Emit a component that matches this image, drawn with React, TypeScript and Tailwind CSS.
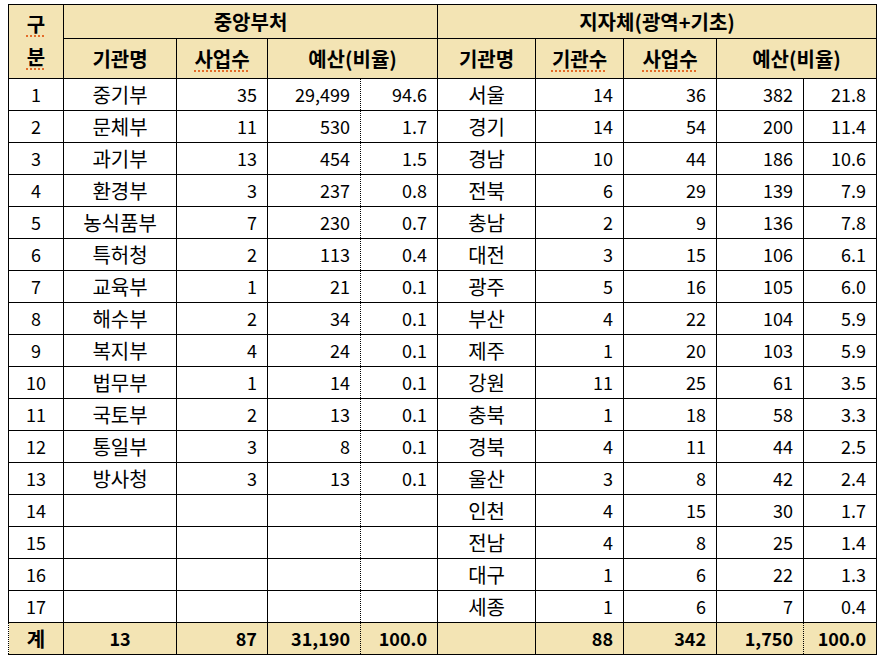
const central = [
  ["중기부", "35", "29,499", "94.6"],
  ["문체부", "11", "530", "1.7"],
  ["과기부", "13", "454", "1.5"],
  ["환경부", "3", "237", "0.8"],
  ["농식품부", "7", "230", "0.7"],
  ["특허청", "2", "113", "0.4"],
  ["교육부", "1", "21", "0.1"],
  ["해수부", "2", "34", "0.1"],
  ["복지부", "4", "24", "0.1"],
  ["법무부", "1", "14", "0.1"],
  ["국토부", "2", "13", "0.1"],
  ["통일부", "3", "8", "0.1"],
  ["방사청", "3", "13", "0.1"],
];

const local = [
  ["서울", "14", "36", "382", "21.8"],
  ["경기", "14", "54", "200", "11.4"],
  ["경남", "10", "44", "186", "10.6"],
  ["전북", "6", "29", "139", "7.9"],
  ["충남", "2", "9", "136", "7.8"],
  ["대전", "3", "15", "106", "6.1"],
  ["광주", "5", "16", "105", "6.0"],
  ["부산", "4", "22", "104", "5.9"],
  ["제주", "1", "20", "103", "5.9"],
  ["강원", "11", "25", "61", "3.5"],
  ["충북", "1", "18", "58", "3.3"],
  ["경북", "4", "11", "44", "2.5"],
  ["울산", "3", "8", "42", "2.4"],
  ["인천", "4", "15", "30", "1.7"],
  ["전남", "4", "8", "25", "1.4"],
  ["대구", "1", "6", "22", "1.3"],
  ["세종", "1", "6", "7", "0.4"],
];

const cell = "border border-black p-0";
const num = `${cell} text-right pr-[10px]`;
const mid = `${cell} text-center`;
const kor = `${cell} text-center text-[20px]`;
const head = "bg-[#f3e4b4] font-bold";

// spell-check squiggle under some header words
function Squiggle({ children }: { children: React.ReactNode }) {
  return (
    <span className="underline decoration-dotted decoration-[#e46c2a] decoration-[1.5px] underline-offset-[4px]">
      {children}
    </span>
  );
}

export default function App() {
  return (
    <div className="bg-white min-h-[661px] pt-[4px] pl-[8px] text-black text-[18px] font-['Malgun_Gothic','Noto_Sans_CJK_KR',sans-serif]">
      <table className="table-fixed border-collapse w-[868px]">
        <colgroup>
          <col className="w-[55px]" />
          <col className="w-[113px]" />
          <col className="w-[91px]" />
          <col className="w-[93px]" />
          <col className="w-[77px]" />
          <col className="w-[98px]" />
          <col className="w-[88px]" />
          <col className="w-[93px]" />
          <col className="w-[87px]" />
          <col className="w-[73px]" />
        </colgroup>
        <thead>
          <tr className={`${head} h-[34px]`}>
            <td rowSpan={2} className={kor}>
              <div className="flex flex-col items-center leading-[33px] pb-[4px]">
                <Squiggle>구</Squiggle>
                <Squiggle>분</Squiggle>
              </div>
            </td>
            <td colSpan={4} className={kor}>
              중앙부처
            </td>
            <td colSpan={5} className={kor}>
              지자체(광역+기초)
            </td>
          </tr>
          <tr className={`${head} h-[40px]`}>
            <td className={kor}>기관명</td>
            <td className={kor}>
              <Squiggle>사업수</Squiggle>
            </td>
            <td colSpan={2} className={kor}>
              예산(비율)
            </td>
            <td className={kor}>기관명</td>
            <td className={kor}>
              <Squiggle>기관수</Squiggle>
            </td>
            <td className={kor}>
              <Squiggle>사업수</Squiggle>
            </td>
            <td colSpan={2} className={kor}>
              예산(비율)
            </td>
          </tr>
        </thead>
        <tbody>
          {local.map((l, i) => {
            const c = central[i];
            return (
              <tr key={i} className="h-[32px]">
                <td className={mid}>{i + 1}</td>
                <td className={kor}>{c ? c[0] : ""}</td>
                <td className={num}>{c ? c[1] : ""}</td>
                <td className={`${num} [border-right-style:dotted]`}>{c ? c[2] : ""}</td>
                <td className={`${num} [border-left-style:dotted]`}>{c ? c[3] : ""}</td>
                <td className={kor}>{l[0]}</td>
                <td className={num}>{l[1]}</td>
                <td className={num}>{l[2]}</td>
                <td className={num}>{l[3]}</td>
                <td className={num}>{l[4]}</td>
              </tr>
            );
          })}
          <tr className={`${head} h-[32px]`}>
            <td className={`${kor} [border-left-style:dotted]`}>계</td>
            <td className={mid}>13</td>
            <td className={num}>87</td>
            <td className={`${num} [border-right-style:dotted]`}>31,190</td>
            <td className={`${num} [border-left-style:dotted]`}>100.0</td>
            <td className={mid}></td>
            <td className={num}>88</td>
            <td className={num}>342</td>
            <td className={`${num} [border-right-style:dotted]`}>1,750</td>
            <td className={`${num} [border-left-style:dotted]`}>100.0</td>
          </tr>
        </tbody>
      </table>
    </div>
  );
}
